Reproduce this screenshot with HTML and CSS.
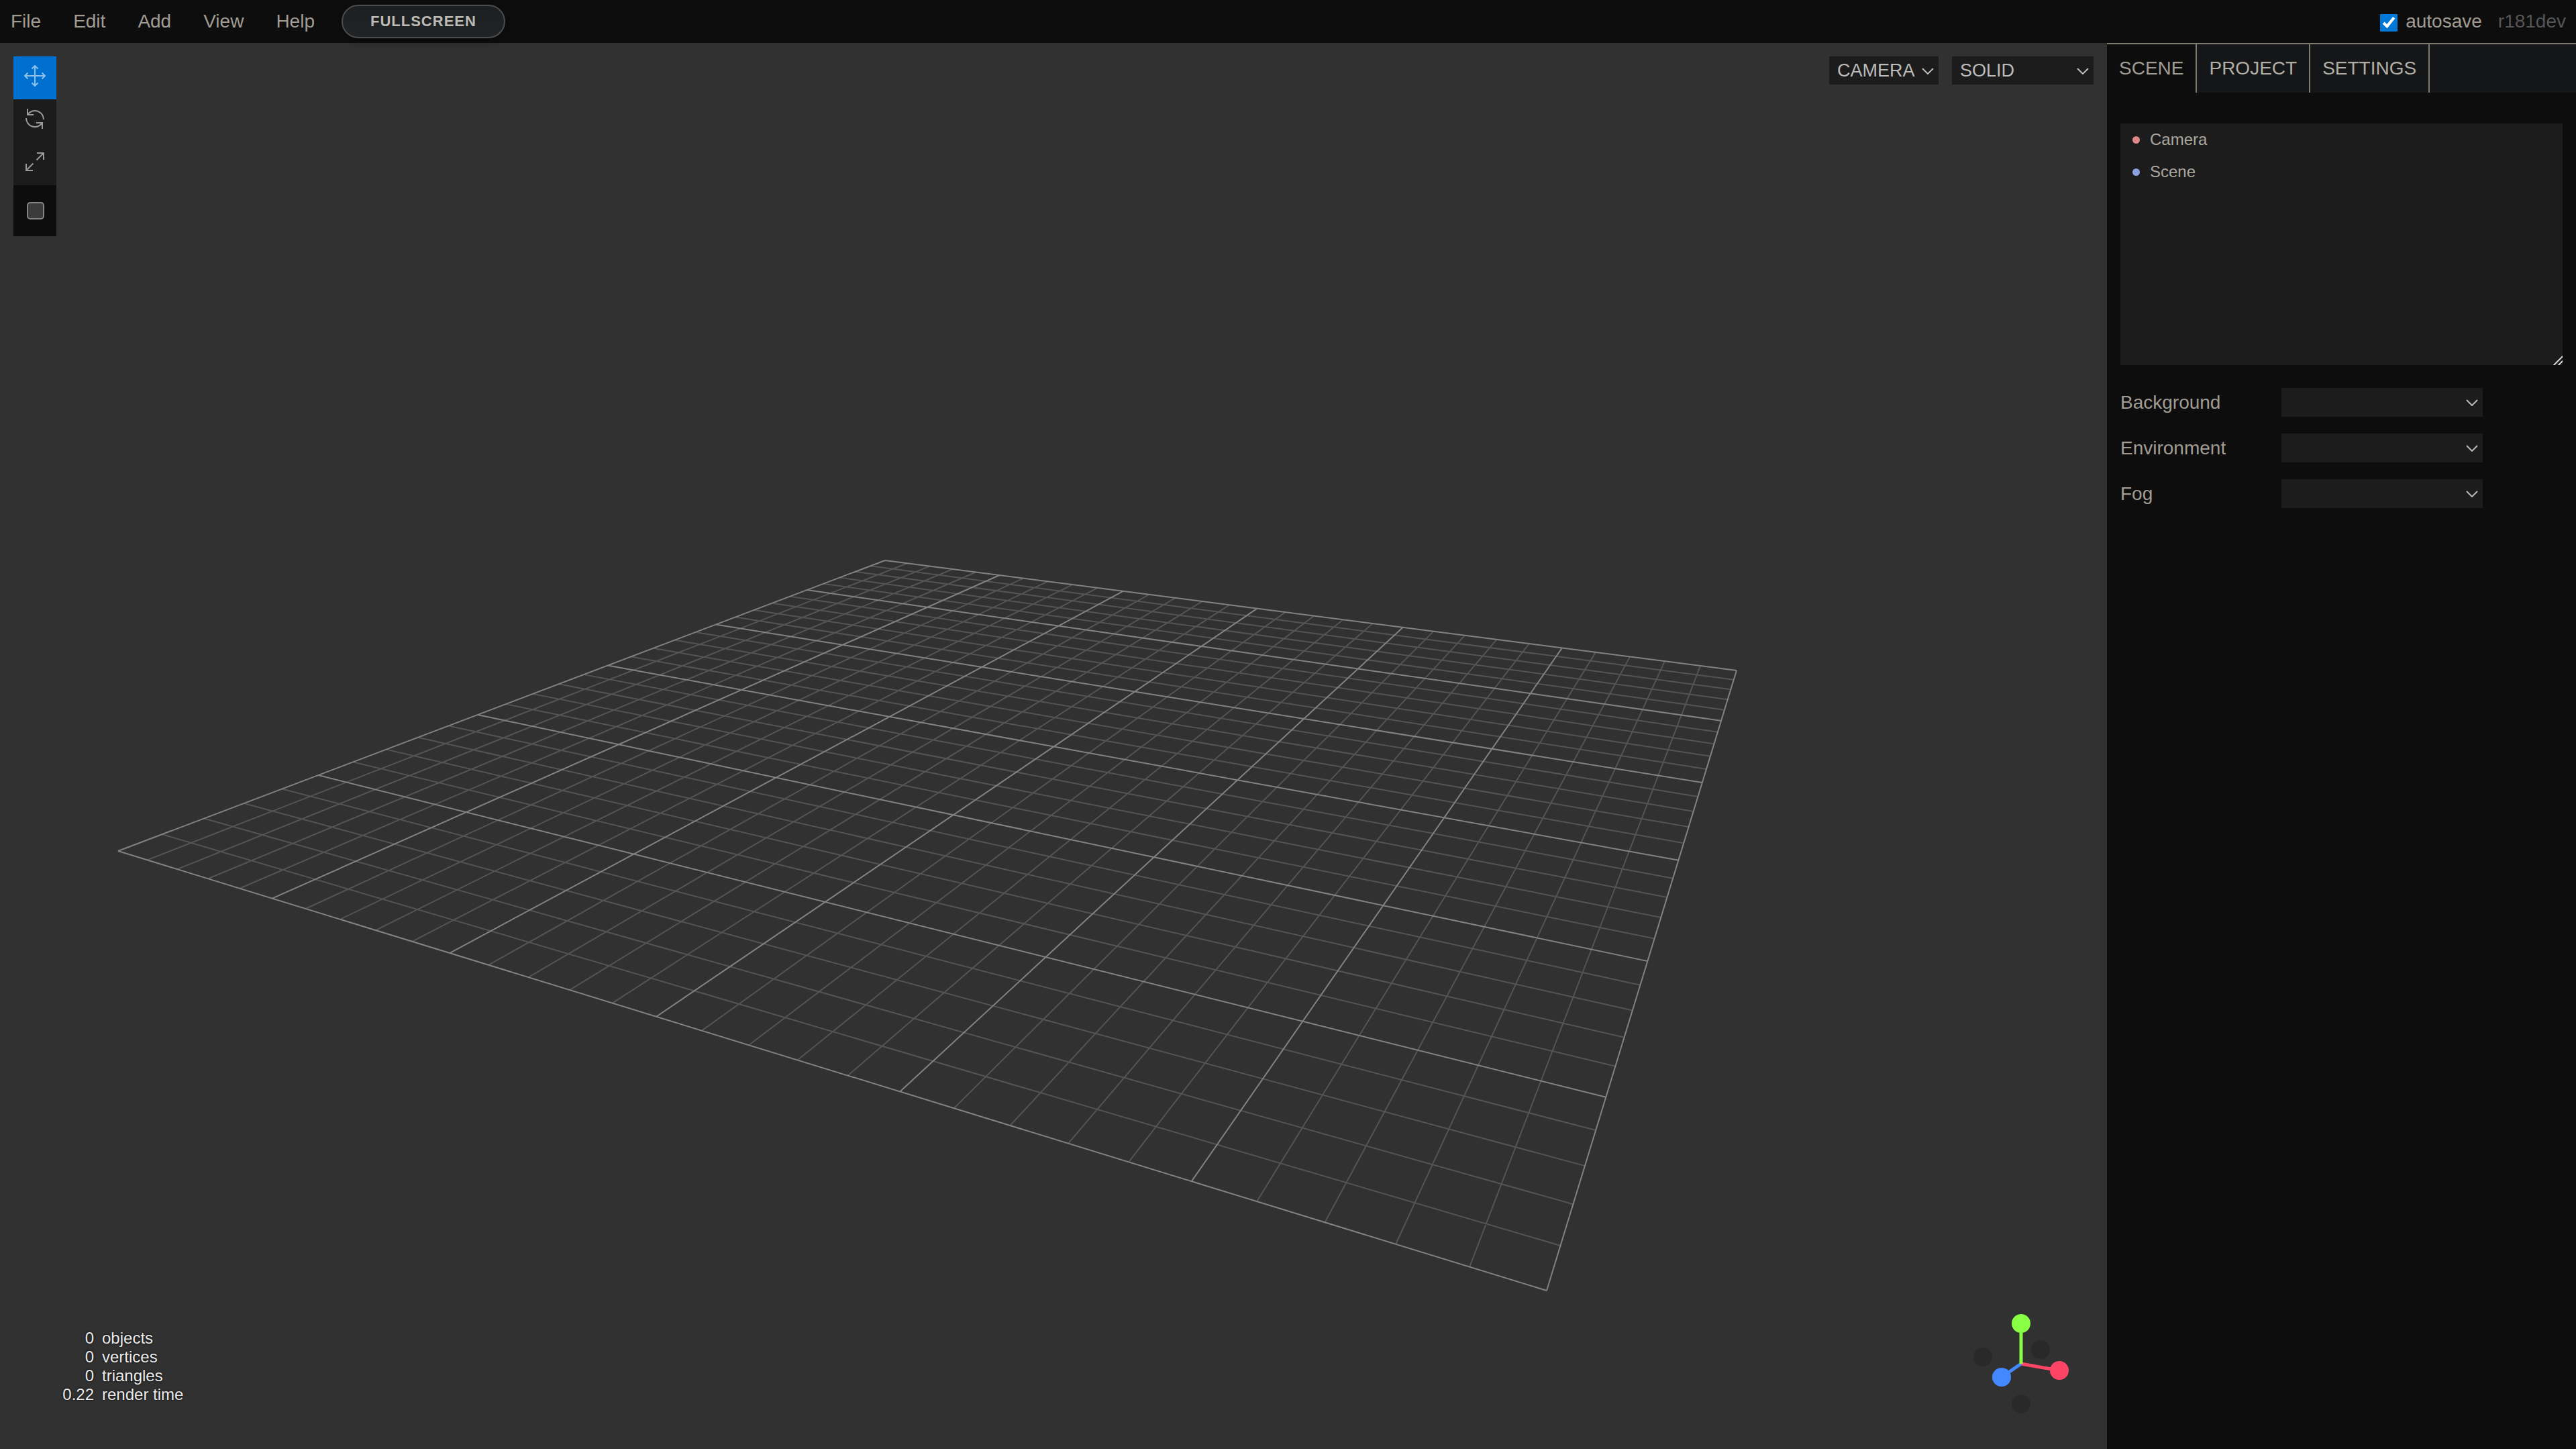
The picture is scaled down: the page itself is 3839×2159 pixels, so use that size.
FILE: index.html
```html
<!DOCTYPE html>
<html lang="en">
<head>
  <meta charset="UTF-8" />
  <meta name="viewport" content="width=device-width, initial-scale=1.0"/>
  <title>three.js editor</title>
  <link rel="stylesheet" href="styles.css">
</head>
<body>
  <header class="menubar">
    <nav class="menus">
      <button class="menu">File</button>
      <button class="menu">Edit</button>
      <button class="menu">Add</button>
      <button class="menu">View</button>
      <button class="menu">Help</button>
    </nav>
    <button class="fullscreen">FULLSCREEN</button>
    <div class="status">
      <input class="autosave" type="checkbox" id="autosave" checked>
      <label for="autosave">autosave</label>
      <span class="version">r181dev</span>
    </div>
  </header>

  <div class="workspace">
    <main class="viewport">
      <svg class="grid" id="grid" viewBox="0 0 3140 2095" aria-hidden="true"></svg>

      <div class="toolbar">
        <button class="tool selected" aria-label="Translate">
          <svg viewBox="0 0 32 32"><path d="M16 1v30M1 16h30M11.500 5.500L16 1l4.500 4.500M11.500 26.500L16 31l4.500-4.500M5.500 11.500L1 16l4.500 4.500M26.500 11.500L31 16l-4.500 4.500"/></svg>
        </button>
        <button class="tool" aria-label="Rotate">
          <svg viewBox="0 0 32 32"><path d="M5 1v9h9M5 10A13 13 0 0 1 29 17M27 31v-9h-9M27 22A13 13 0 0 1 3 15"/></svg>
        </button>
        <button class="tool" aria-label="Scale">
          <svg viewBox="0 0 32 32"><path d="M19 3h10v10M29 3L18.500 13.500M13 29H3V19M3 29l10.500-10.500"/></svg>
        </button>
        <div class="local">
          <input class="local-check" type="checkbox" aria-label="Local">
        </div>
      </div>

      <div class="controls">
        <div class="select">
          <select class="camera" aria-label="Camera"><option>CAMERA</option></select>
          <svg class="chevron" viewBox="0 0 18 10"><path d="M1 1l8 8 8-8"/></svg>
        </div>
        <div class="select">
          <select class="shading" aria-label="Shading"><option>SOLID</option><option>NORMALS</option><option>WIREFRAME</option></select>
          <svg class="chevron" viewBox="0 0 18 10"><path d="M1 1l8 8 8-8"/></svg>
        </div>
      </div>

      <table class="info">
        <tr><td>0</td><th scope="row">objects</th></tr>
        <tr><td>0</td><th scope="row">vertices</th></tr>
        <tr><td>0</td><th scope="row">triangles</th></tr>
        <tr><td>0.22</td><th scope="row">render time</th></tr>
      </table>

      <svg class="gizmo" viewBox="0 0 256 256" aria-hidden="true">
        <g class="axis-back">
          <circle cx="71" cy="119" r="14"/>
          <circle cx="157" cy="108" r="14"/>
          <circle cx="128" cy="189" r="14"/>
        </g>
        <g class="axis-x"><path d="M128 129l57 10"/><circle cx="185" cy="139" r="14"/></g>
        <g class="axis-z"><path d="M128 129l-29 20"/><circle cx="99" cy="149" r="14"/></g>
        <g class="axis-y"><path d="M128 129v-60"/><circle cx="128" cy="69" r="14"/></g>
      </svg>
    </main>

    <aside class="sidebar">
      <div class="tabs">
        <button class="tab active">SCENE</button>
        <button class="tab">PROJECT</button>
        <button class="tab">SETTINGS</button>
      </div>
      <div class="panel">
        <ul class="outliner">
          <li><span class="dot camera-dot"></span>Camera</li>
          <li><span class="dot scene-dot"></span>Scene</li>
        </ul>
        <div class="row">
          <label for="background">Background</label>
          <div class="select">
            <select id="background"><option></option></select>
            <svg class="chevron" viewBox="0 0 18 10"><path d="M1 1l8 8 8-8"/></svg>
          </div>
        </div>
        <div class="row">
          <label for="environment">Environment</label>
          <div class="select">
            <select id="environment"><option></option></select>
            <svg class="chevron" viewBox="0 0 18 10"><path d="M1 1l8 8 8-8"/></svg>
          </div>
        </div>
        <div class="row">
          <label for="fog">Fog</label>
          <div class="select">
            <select id="fog"><option></option></select>
            <svg class="chevron" viewBox="0 0 18 10"><path d="M1 1l8 8 8-8"/></svg>
          </div>
        </div>
      </div>
    </aside>
  </div>

  <script src="grid.js"></script>
</body>
</html>
```
FILE: styles.css
```css
:root {
  --bg: #0d0d0d;
  --field: #1c1c1c;
  --text: #a09c93;
  --line: #7d7b70;
  --view: #313131;
}

* {
  box-sizing: border-box;
}

body {
  margin: 0;
  height: 100vh;
  display: flex;
  flex-direction: column;
  overflow: hidden;
  background: var(--bg);
  color: var(--text);
  font-family: "Liberation Sans", Arial, sans-serif;
  font-size: 28px;
  line-height: 32px;
}

button, select {
  font: inherit;
  color: inherit;
  border: 0;
  border-radius: 0;
  margin: 0;
  padding: 0;
  background: none;
}

svg {
  display: block;
  fill: none;
}

/* menubar */
.menubar {
  height: 64px;
  flex: none;
  display: flex;
  align-items: center;
  position: relative;
  z-index: 1;
}

.menus {
  display: flex;
  gap: 48px;
  padding: 0 40px 0 16px;
}

.fullscreen {
  height: 50px;
  padding: 0 41px;
  border: 2px solid #4c4c4c;
  border-radius: 25px;
  background: linear-gradient(#1c1e20, #212426);
  box-shadow: 0 4px 16px rgba(0, 0, 0, 0.3);
  color: #bdbbb5;
  font-size: 22px;
  font-weight: bold;
  letter-spacing: 1px;
}

.status {
  margin-left: auto;
  padding-right: 15px;
  display: flex;
  align-items: center;
}

.autosave {
  width: 26px;
  height: 26px;
  margin: 4px 12px 0 0;
  accent-color: #0078d7;
}

.version {
  margin-left: 24px;
  color: #555;
}

/* workspace */
.workspace {
  flex: 1;
  min-height: 0;
  display: flex;
}

.viewport {
  flex: 1;
  min-width: 0;
  position: relative;
  background: var(--view);
}

.grid {
  width: 100%;
  height: 100%;
  stroke-width: 2;
}

.minor {
  stroke: #545454;
}

.major {
  stroke: #828282;
}

.toolbar {
  position: absolute;
  left: 20px;
  top: 20px;
  width: 64px;
  background: var(--field);
}

.tool {
  display: flex;
  width: 64px;
  height: 64px;
  padding: 13px 16px 19px;
}

.tool svg {
  width: 32px;
  height: 32px;
  stroke: #999;
  stroke-width: 2;
}

.tool.selected {
  background: #0070d0;
}

.tool.selected svg {
  stroke: #8cbfea;
}

.local {
  height: 76px;
  padding: 25px 20px;
  background: var(--bg);
}

.local-check {
  appearance: none;
  display: block;
  width: 26px;
  height: 26px;
  margin: 0;
  border: 2px solid #858585;
  border-radius: 5px;
  background: #3b3b3b;
}

.controls {
  position: absolute;
  top: 20px;
  right: 20px;
  display: flex;
  gap: 20px;
}

.select {
  position: relative;
  color: #bbb;
}

.select select {
  appearance: none;
  display: block;
  width: 300px;
  height: 43px;
  padding: 0 12px;
  background: var(--field);
}

.controls select {
  height: 42px;
  font-size: 27px;
}

.select .camera {
  width: 163px;
}

.select .shading {
  width: 211px;
}

.chevron {
  position: absolute;
  right: 7px;
  top: 17px;
  width: 18px;
  height: 10px;
  stroke: #bbb;
  stroke-width: 2;
  pointer-events: none;
}

.info {
  position: absolute;
  left: 90px;
  bottom: 67px;
  border-collapse: collapse;
  color: #ececec;
  font-size: 24px;
  line-height: 28px;
  text-shadow: 0 0 3px #000;
}

.info td, .info th {
  padding: 0;
  font-weight: normal;
  text-align: left;
}

.info td {
  width: 62px;
  padding-right: 12px;
  text-align: right;
}

.gizmo {
  position: absolute;
  right: 0;
  bottom: 0;
  width: 256px;
  height: 256px;
  stroke-width: 5;
}

.axis-back {
  fill: #292929;
}

.axis-x {
  fill: #ff4466;
  stroke: #ff4466;
}

.axis-y {
  fill: #88ff44;
  stroke: #88ff44;
}

.axis-z {
  fill: #4488ff;
  stroke: #4488ff;
}

.gizmo circle {
  stroke: none;
}

/* sidebar */
.sidebar {
  width: 699px;
  flex: none;
}

.tabs {
  display: flex;
  height: 74px;
  border-top: 2px solid var(--line);
  background: #151617;
}

.tab {
  padding: 0 18px;
  border-right: 2px solid var(--line);
  color: #b0aea6;
}

.tab.active {
  background: var(--bg);
  color: var(--text);
}

.panel {
  padding: 46px 20px;
  display: flex;
  flex-direction: column;
  gap: 25px;
}

.outliner {
  height: 360px;
  margin: 0 0 9px;
  padding: 0;
  overflow: auto;
  resize: vertical;
  list-style: none;
  background: #1c1c1c;
  color: #aaa79f;
  font-size: 24px;
  line-height: 48px;
}

.outliner::-webkit-resizer {
  background: linear-gradient(135deg, transparent 11px, #ccc 11px, #ccc 13px, transparent 13px, transparent 16px, #ccc 16px, #ccc 18px, transparent 18px);
}

.outliner li {
  display: flex;
  align-items: center;
  gap: 15px;
  padding-left: 18px;
}

.dot {
  width: 11px;
  height: 11px;
  border-radius: 50%;
}

.camera-dot {
  background: #dd8888;
}

.scene-dot {
  background: #88a0dd;
}

.row {
  display: flex;
  align-items: center;
}

.row label {
  width: 240px;
}
```
FILE: grid.js
```js
// floor grid seen in perspective: corners of the floor on screen
const corners = [[176, 1204], [1319, 771], [2588, 935], [2305, 1859]];
const divisions = 30;
const svg = document.getElementById('grid');

// projective map from the unit square to the four corners
const [[x0, y0], [x1, y1], [x2, y2], [x3, y3]] = corners;
const dx1 = x1 - x2, dx2 = x3 - x2, sx = x0 - x1 + x2 - x3;
const dy1 = y1 - y2, dy2 = y3 - y2, sy = y0 - y1 + y2 - y3;
const det = dx1 * dy2 - dx2 * dy1;
const g = (sx * dy2 - dx2 * sy) / det;
const h = (dx1 * sy - sx * dy1) / det;

function project(u, v) {
  const w = g * u + h * v + 1;
  return [
    ((x1 - x0 + g * x1) * u + (x3 - x0 + h * x3) * v + x0) / w,
    ((y1 - y0 + g * y1) * u + (y3 - y0 + h * y3) * v + y0) / w
  ];
}

function addLines(className, wanted) {
  let d = '';
  for (let i = 0; i <= divisions; i++) {
    if (!wanted(i)) continue;
    const t = i / divisions;
    d += `M${project(t, 0)}L${project(t, 1)}M${project(0, t)}L${project(1, t)}`;
  }
  const path = document.createElementNS('http://www.w3.org/2000/svg', 'path');
  path.setAttribute('class', className);
  path.setAttribute('d', d);
  svg.appendChild(path);
}

addLines('minor', i => i % 5 !== 0);
addLines('major', i => i % 5 === 0);
```
